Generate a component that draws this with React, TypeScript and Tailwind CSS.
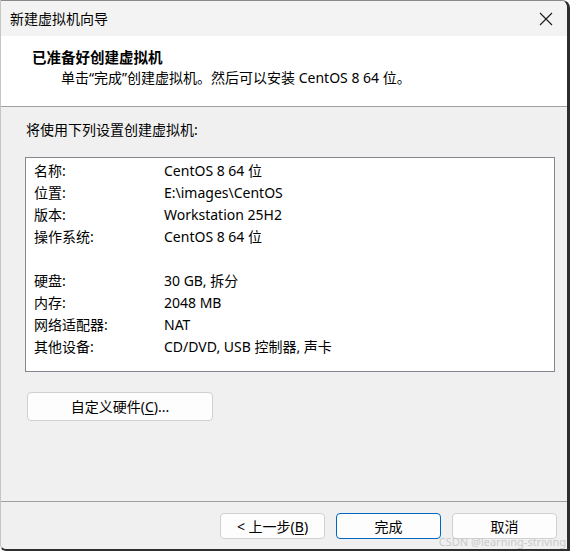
const font = { fontFamily: '"Segoe UI", "Noto Sans", "Noto Sans CJK SC", sans-serif' };

const rows: [string, string][] = [
  ['名称:', 'CentOS 8 64 位'],
  ['位置:', 'E:\\images\\CentOS'],
  ['版本:', 'Workstation 25H2'],
  ['操作系统:', 'CentOS 8 64 位'],
  ['', ''],
  ['硬盘:', '30 GB, 拆分'],
  ['内存:', '2048 MB'],
  ['网络适配器:', 'NAT'],
  ['其他设备:', 'CD/DVD, USB 控制器, 声卡'],
];

const DialogButton = ({ children, primary }: { children: React.ReactNode; primary?: boolean }) => (
  <button
    className={
      'w-[105px] h-[26px] rounded-[4px] bg-[#fdfdfd] text-[14px] text-black flex items-center justify-center ' +
      (primary ? 'border border-[#0067c0]' : 'border border-[#d0d0d0]')
    }
  >
    {children}
  </button>
);

export default function App() {
  return (
    <div
      style={font}
      className="relative w-[570px] h-[551px] flex flex-col bg-[#f0f0f0] text-black border-t border-l border-t-[#8a8a8a] border-l-[#c4c4c4] border-r-[3px] border-b-[2px] border-r-[#2e2e2e] border-b-[#2e2e2e] rounded-tr-[8px] rounded-bl-[6px] overflow-hidden"
    >
      {/* title bar */}
      <div className="h-[35px] shrink-0 bg-[#f3f3f3] flex items-center justify-between pl-[9px] pr-[12px]">
        <span className="text-[14px] leading-none">新建虚拟机向导</span>
        <svg width="14" height="14" viewBox="0 0 14 14" className="mr-[2px]">
          <path d="M1 1 L13 13 M13 1 L1 13" stroke="#1a1a1a" strokeWidth="1.1" fill="none" />
        </svg>
      </div>

      {/* header */}
      <div className="h-[71px] shrink-0 bg-white border-b border-[#a0a0a0] pt-[11px]">
        <div className="pl-[31px] text-[14.5px] font-bold leading-[20px]">已准备好创建虚拟机</div>
        <div className="pl-[60px] text-[14px] leading-[22px]">单击“完成”创建虚拟机。然后可以安装 CentOS 8 64 位。</div>
      </div>

      {/* body */}
      <div className="flex-1 flex flex-col pl-[24px] pr-[12px]">
        <div className="pl-[1px] mt-[13px] text-[14px] leading-[20px]">将使用下列设置创建虚拟机:</div>
        <div className="mt-[17px] w-[530px] h-[215px] bg-white border border-[#828790] pt-[1px]">
          {rows.map(([k, v], i) => (
            <div key={i} className="h-[22px] flex items-center text-[14px]">
              <span className="w-[138px] pl-[8px]">{k}</span>
              <span>{v}</span>
            </div>
          ))}
        </div>
        <button className="mt-[20px] ml-[2px] w-[186px] h-[29px] rounded-[4px] bg-[#fdfdfd] border border-[#d0d0d0] text-[14px] flex items-center justify-center">
          自定义硬件(<span className="underline underline-offset-2">C</span>)...
        </button>
      </div>

      {/* footer */}
      <div className="h-[48px] shrink-0 border-t border-[#a0a0a0] flex justify-end gap-[11px] pr-[10px] pt-[11px]">
        <DialogButton>
          &lt; 上一步(<span className="underline underline-offset-2">B</span>)
        </DialogButton>
        <DialogButton primary>完成</DialogButton>
        <DialogButton>取消</DialogButton>
      </div>

      <span className="absolute right-[1px] bottom-[2px] text-[11px] leading-none text-[#c9c9c9] pointer-events-none">
        CSDN @learning-striving
      </span>
    </div>
  );
}
